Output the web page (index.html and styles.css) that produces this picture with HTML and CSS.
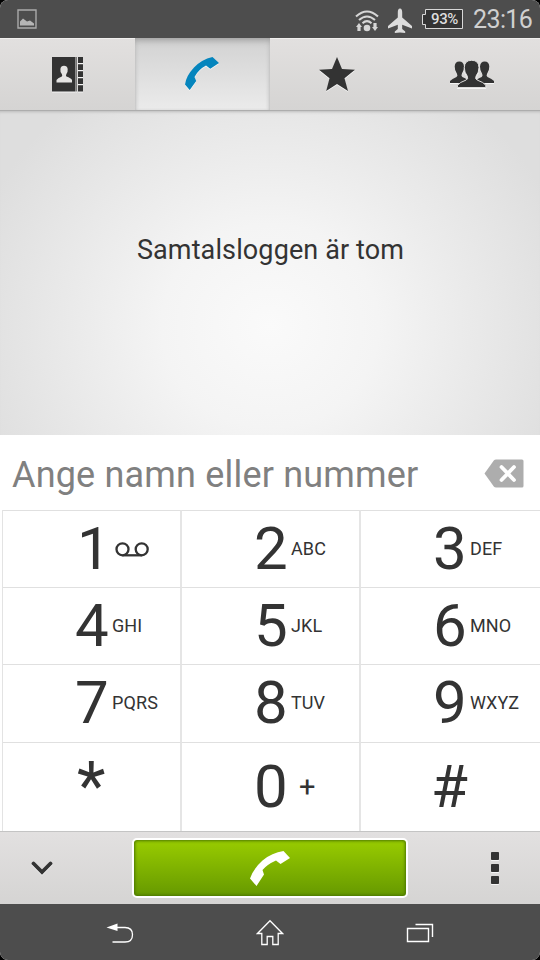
FILE: index.html
```html
<!DOCTYPE html>
<html lang="sv">
<head>
<meta charset="utf-8">
<title>Telefon</title>
<link rel="stylesheet" href="styles.css">
</head>
<body>
<div class="phone">
  <header class="status">
    <svg class="picture" width="20" height="20" viewBox="0 0 20 20"><path d="M1 1h18v18H1z" fill="none" stroke="#aaa" stroke-width="1.4"/><path d="M3 16.500v-4l3-3 4 3 3-1 4 3v2z" fill="#b5b5b5"/></svg>
    <svg class="wifi" width="24" height="24" viewBox="0 0 24 24"><g fill="none" stroke="#d6d6d6" stroke-width="2.100"><path d="M1 7.500q11-10 22 0M4 11q8-7 16 0M7.500 14.200q4.500-4 9 0"/></g><circle cx="12" cy="19" r="3.300" fill="#d6d6d6"/><path d="M4 14l3 4H5.600v4H2.400v-4H1zM20 22l3-4h-1.400v-4h-3.200v4H17z" fill="#d6d6d6"/></svg>
    <svg class="plane" width="26" height="26" viewBox="0 0 26 26"><path d="M13 .5c1.700 0 2.200 2 2.200 4v5L25 18v2.500l-9.800-3.700v4.200l3 2.500V25L13 24.500 7.800 25v-1.500l3-2.500v-4.200L1 20.500V18l9.800-8.500v-5c0-2 .5-4 2.200-4z" fill="#dcdcdc"/></svg>
    <div class="battery"><svg width="41" height="20" viewBox="0 0 41 20"><path d="M3.500.5h37v19h-37v-4H.5v-10h3z" fill="#333" stroke="#d8d8d8"/></svg><span>93%</span></div>
    <span class="clock">23:16</span>
  </header>
  <nav class="tabs">
    <div class="tab"><svg width="34" height="38" viewBox="0 0 34 38"><path d="M2 2h23.500v34.500H2zM28 2h5v6h-5zM28 9.200h5V15h-5zM28 16.200h5V22h-5zM28 23.200h5V29h-5zM28 30.200h5v6.300h-5z"/><path d="M26.500 2v34.500" stroke="#777"/><path d="M6.500 27.500v-2.600q1-1.700 5.300-3.300.9-.6 0-2.500-1.800-2-1.400-5 .5-3.300 3.600-3.300 3.200 0 3.700 3.300.3 3-1.300 5-.9 1.900 0 2.500 4.700 1.600 5.600 3.300v2.600z" fill="#e5e4e3"/></svg></div>
    <div class="tab active"><svg width="36" height="36" viewBox="0 0 36 36"><path d="M28.500 1L35 7l-8.700 5.800-4.300-3.200q-7.500 4-11.500 11.300l1.700 4-6.500 9L1 28.500Q2 20 10 11.500 17.500 3.500 28.500 1z" fill="#0585bd"/></svg></div>
    <div class="tab"><svg width="36" height="36" viewBox="0 0 36 36"><path d="M18 1l5 12 13 .7-10.500 8.500L29 35l-11-7-10.800 7L10.500 22.200 0 13.700l13-.7z"/></svg></div>
    <div class="tab"><svg width="44" height="28" viewBox="0 0 44 28"><path d="M0 23v-2q2-2 6.500-4 1.500-1 .5-3Q4.500 10.500 4.700 6.500q.3-5 4.600-5t4.700 5q.2 4-2.200 7.500-.8 2 .5 3 3 1.200 5 3V23z"/><path d="M44 23v-2q-2-2-6.500-4-1.500-1-.5-3 2.500-3.500 2.300-7.500-.3-5-4.600-5T30 6.500q-.2 4 2.200 7.500.8 2-.5 3-3 1.200-5 3V23z"/><path d="M7.500 27.500v-2.200q2-3 8.700-5.300 2.300-1 1-4-2.900-3.500-2.900-8.500.2-7.200 7.400-7.200 7.100 0 7.300 7.200 0 5-2.900 8.500-1.300 3 1 4 6.700 2.300 8.700 5.300v2.200z" stroke="#dedddc"/></svg></div>
  </nav>
  <main class="log"><p>Samtalsloggen är tom</p></main>
  <section class="entry">
    <span>Ange namn eller nummer</span>
    <svg width="40" height="29" viewBox="0 0 40 29"><path d="M.500 14.500L10 1.200Q10.800.5 12 .5h26q1.500 0 1.500 1.500v25q0 1.500-1.500 1.500H12q-1.200 0-2-.7z" fill="#adadad"/><path d="M17.500 8l12.500 13M30 8L17.500 21" stroke="#fff" stroke-width="3.800" fill="none" stroke-linecap="round"/></svg>
  </section>
  <section class="keys">
    <div class="key"><b class="one">1</b><svg class="voicemail" width="34" height="15" viewBox="0 0 34 15"><g fill="none" stroke="#333" stroke-width="2.300"><circle cx="7.500" cy="7.300" r="6"/><circle cx="26.700" cy="7.300" r="6"/><path d="M7.500 13.300h19.200"/></g></svg></div>
    <div class="key"><b>2</b><i>ABC</i></div>
    <div class="key"><b>3</b><i>DEF</i></div>
    <div class="key"><b>4</b><i>GHI</i></div>
    <div class="key"><b>5</b><i>JKL</i></div>
    <div class="key"><b>6</b><i>MNO</i></div>
    <div class="key"><b>7</b><i>PQRS</i></div>
    <div class="key"><b>8</b><i>TUV</i></div>
    <div class="key"><b>9</b><i>WXYZ</i></div>
    <div class="key"><b class="star">*</b></div>
    <div class="key"><b>0</b><i class="plus">+</i></div>
    <div class="key"><b class="hash">#</b></div>
  </section>
  <section class="actions">
    <div class="side"><svg class="chevron" width="22" height="14" viewBox="0 0 22 14"><path d="M2.500 2.500L11 11l8.500-8.500" fill="none" stroke="#333" stroke-width="3.800" stroke-linecap="round"/></svg></div>
    <div class="call"><svg width="42" height="37" viewBox="0 0 42 37"><path d="M34.500 1L41 8l-9.500 6-4.500-3.500Q18 14.500 13.500 20l1.500 4.500L7.500 36 1 28.500Q4 19 13.500 10.500 23 2.500 34.500 1z" fill="#fff"/></svg></div>
    <div class="side more"><svg width="8" height="33" viewBox="0 0 8 33"><rect width="8" height="8" rx=".8"/><rect y="12" width="8" height="8" rx=".8"/><rect y="24" width="8" height="8" rx=".8"/></svg></div>
  </section>
  <footer class="system">
    <svg width="28" height="22" viewBox="0 0 28 22"><path d="M10 5.500h9q7.500 0 7.500 7.200T19 20H6.500" fill="none" stroke="#fff" stroke-width="1.300"/><path d="M.5 5.500L11.500 1.500V9z" fill="#fff"/></svg>
    <svg width="28" height="28" viewBox="0 0 28 28"><path d="M14 1.800L26.500 14.500h-4.300v11h-5.400v-8h-5.600v8H5.800v-11H1.500z" fill="none" stroke="#fff" stroke-width="1.300"/></svg>
    <svg width="28" height="20" viewBox="0 0 28 20"><path d="M1.500 5.500h21v13h-21zM9.500 1.500h17v12.500" fill="none" stroke="#fff" stroke-width="1.400"/></svg>
  </footer>
</div>
</body>
</html>
```

FILE: styles.css
```css
* { box-sizing: border-box; }
body { margin: 0; background: #000; font-family: Roboto, sans-serif; color: #333; }
svg { display: block; flex: none; fill: #333; }
.phone { width: 540px; height: 960px; display: flex; flex-direction: column; overflow: hidden; border-radius: 8px; background: #fff; }
.status { height: 38px; flex: none; background: #4d4d4d; color: #d0d0d0; display: flex; align-items: center; padding: 0 7px 0 17px; }
.wifi { margin-left: auto; margin-right: 8px; margin-top: 3px; }
.plane { margin-right: 9px; margin-top: 4px; }
.battery { display: grid; width: 41px; }
.battery svg, .battery span { grid-area: 1 / 1; }
.battery span { font-size: 15px; font-weight: 500; line-height: 21px; height: 20px; padding-left: 9px; letter-spacing: -.35px; color: #ddd; }
.clock { width: 60px; margin-left: 10px; font-size: 25px; line-height: 38px; letter-spacing: -.6px; margin-top: 2px; white-space: nowrap; }
.tabs { height: 73px; flex: none; display: grid; grid-template-columns: repeat(4, 1fr); background: linear-gradient(#e2e0df, #d5d4d3); border-top: 1px solid #f0efee; border-bottom: 1px solid #adadad; }
.tab { display: flex; align-items: center; justify-content: center; padding: 0 2px 2px 0; }
.tab svg { filter: drop-shadow(0 1px 0 #f5f5f5); }
.active { margin-top: -1px; padding-bottom: 0; background: linear-gradient(#d2d2d2, #ebebeb); box-shadow: inset 0 5px 7px -3px #999, inset 2px 0 3px -1px #ccc, inset -2px 0 3px -1px #ccc; }
.log { height: 324px; flex: none; background: radial-gradient(ellipse 310px 290px at 270px 215px, #fafafa, #f4f4f4 35%, #dedede 100%); box-shadow: inset 0 3px 3px -2px #bbb; }
.log p { margin: 121px 0 0; text-align: center; font-size: 27px; line-height: 36px; letter-spacing: .12px; padding-left: 1px; }
.entry { height: 75px; flex: none; display: flex; align-items: center; justify-content: space-between; padding: 1px 16px 0 12px; color: #808080; font-size: 36px; white-space: nowrap; }
.entry span { letter-spacing: .18px; padding-top: 3px; }
.keys { height: 321px; flex: none; margin-left: 2px; border-left: 1px solid #e3e3e3; display: grid; grid-template-columns: 179px 179px 180px; grid-template-rows: 77px 77px 78px 89px; }
.key { display: flex; align-items: center; padding-left: 72px; border-top: 1px solid #e0e0e0; border-right: 2px solid #e5e5e5; min-width: 0; }
.key:nth-child(3n) { border-right: 1px solid #e5e5e5; }
.key:nth-child(n+7):nth-child(-n+9) { padding-bottom: 2px; }
.key b { font-weight: 400; font-size: 60px; line-height: 70px; width: 34px; margin-right: 3px; }
.key .one { padding-left: 2px; }
.key .star { font-size: 66px; padding-left: 2px; }
.key .hash { margin-left: -2px; }
.key i { font-style: normal; font-size: 18px; line-height: 20px; letter-spacing: .1px; }
.key .plus { font-size: 29px; padding-left: 8px; }
.voicemail { margin-left: 3px; }
.actions { height: 73px; flex: none; display: flex; align-items: center; background: linear-gradient(#e2e0e0, #d5d4d3); border-top: 1px solid #c4c4c4; }
.side { width: 132px; display: flex; padding-left: 31px; }
.side svg { filter: drop-shadow(0 1px 0 #f5f5f5); }
.more { padding-left: 83px; }
.call { width: 276px; height: 60px; display: flex; align-items: center; justify-content: center; border: 2px solid #fff; border-radius: 5px; background: linear-gradient(#9c0, #690); box-shadow: inset 0 0 3px 1px #4b7600; }
.system { flex: 1; background: #4d4d4d; display: flex; justify-content: center; align-items: center; gap: 122px; padding-top: 2px; }
```
